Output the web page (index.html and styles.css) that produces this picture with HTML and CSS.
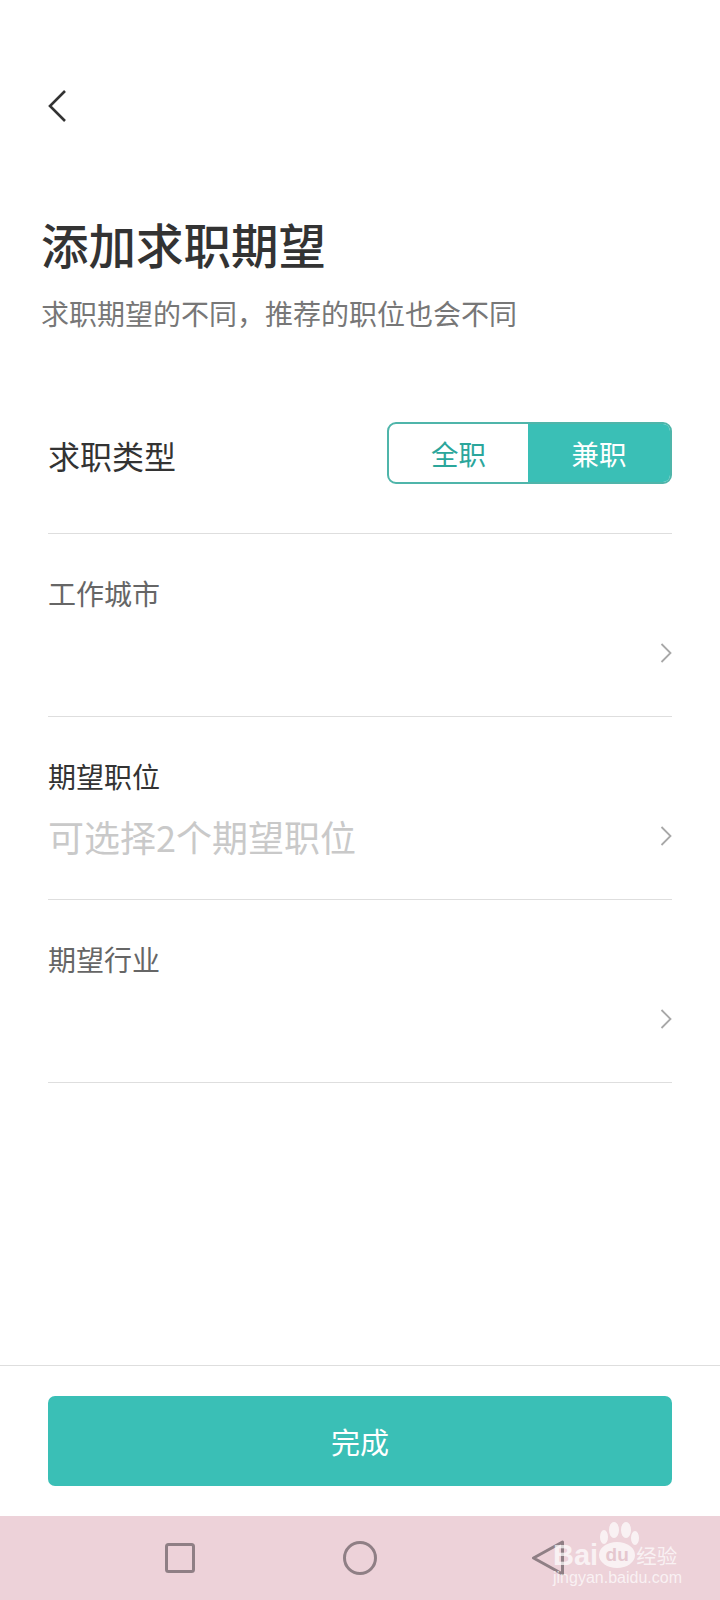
FILE: index.html
```html
<!DOCTYPE html>
<html lang="zh-CN">
<head>
    <meta charset="UTF-8">
    <meta name="viewport" content="width=device-width, initial-scale=1.0">
    <title>添加求职期望</title>
    <link rel="stylesheet" href="styles.css">
</head>
<body>
    <div class="page">
        <main class="content">
            <svg class="back" width="20" height="34" viewBox="0 0 20 34" fill="none">
                <path d="M18 2 L3 17 L18 32" stroke="#333" stroke-width="2.6"/>
            </svg>

            <h1 class="title">添加求职期望</h1>
            <p class="subtitle">求职期望的不同，推荐的职位也会不同</p>

            <div class="type-row">
                <span class="type-label">求职类型</span>
                <div class="toggle">
                    <span class="toggle-item">全职</span>
                    <span class="toggle-item active">兼职</span>
                </div>
            </div>

            <div class="row">
                <div class="row-label muted">工作城市</div>
                <div class="row-value">
                    <span class="placeholder"></span>
                    <svg class="arrow" width="12" height="22" viewBox="0 0 12 22" fill="none">
                        <path d="M1.5 2 L10.5 11 L1.5 20" stroke="#a8a8a8" stroke-width="1.8"/>
                    </svg>
                </div>
            </div>

            <div class="row">
                <div class="row-label">期望职位</div>
                <div class="row-value">
                    <span class="placeholder">可选择2个期望职位</span>
                    <svg class="arrow" width="12" height="22" viewBox="0 0 12 22" fill="none">
                        <path d="M1.5 2 L10.5 11 L1.5 20" stroke="#a8a8a8" stroke-width="1.8"/>
                    </svg>
                </div>
            </div>

            <div class="row">
                <div class="row-label muted">期望行业</div>
                <div class="row-value">
                    <span class="placeholder"></span>
                    <svg class="arrow" width="12" height="22" viewBox="0 0 12 22" fill="none">
                        <path d="M1.5 2 L10.5 11 L1.5 20" stroke="#a8a8a8" stroke-width="1.8"/>
                    </svg>
                </div>
            </div>
        </main>

        <div class="footer">
            <button class="done" type="button">完成</button>
        </div>

        <nav class="navbar">
            <svg width="30" height="30" viewBox="0 0 30 30" fill="none">
                <rect x="1.5" y="1.5" width="27" height="27" rx="2" stroke="#8f7f85" stroke-width="3"/>
            </svg>
            <svg width="34" height="34" viewBox="0 0 34 34" fill="none">
                <circle cx="17" cy="17" r="15.5" stroke="#8f7f85" stroke-width="3"/>
            </svg>
            <svg class="nav-back" width="34" height="36" viewBox="0 0 34 36" fill="none">
                <path d="M31.5 2 L2.5 18 L31.5 34 Z" stroke="#8f7f85" stroke-width="3" stroke-linejoin="round"/>
            </svg>
        </nav>

        <!-- 水印 -->
        <div class="watermark">
            <svg class="paw" width="46" height="24" viewBox="0 0 46 24" fill="#fff">
                <ellipse cx="6" cy="16" rx="4" ry="7"/>
                <ellipse cx="16" cy="9" rx="5" ry="8"/>
                <ellipse cx="28" cy="9" rx="5" ry="8"/>
                <ellipse cx="37" cy="17" rx="4" ry="7"/>
            </svg>
            <div class="wm-brand"><span>Bai</span><span class="wm-du">du</span><span class="wm-cn">经验</span></div>
            <div class="wm-url">jingyan.baidu.com</div>
        </div>
    </div>
</body>
</html>
```

FILE: styles.css
```css
* {
    box-sizing: border-box;
}

body {
    margin: 0;
    background-color: #fff;
    font-family: "Noto Sans CJK SC", "Noto Sans", sans-serif;
}

.page {
    position: relative;
    width: 720px;
    height: 1600px;
    display: flex;
    flex-direction: column;
    overflow: hidden;
}

.content {
    flex: 1;
    padding: 89px 48px 0;
}

.back {
    display: block;
    margin-left: -1px;
}

.title {
    margin: 89px 0 0 -7px;
    font-size: 47.5px;
    line-height: 64px;
    font-weight: 500;
    color: #333;
}

.subtitle {
    margin: 17px 0 0 -7px;
    font-size: 28px;
    line-height: 40px;
    color: #777;
}

.type-row {
    display: flex;
    justify-content: space-between;
    align-items: center;
    height: 131px;
    margin-top: 70px;
    padding-bottom: 31px;
    border-bottom: 1px solid #dedede;
}

.type-label {
    margin-top: 4px;
    font-size: 32px;
    color: #333;
}

.toggle {
    display: grid;
    grid-template-columns: 139px 1fr;
    width: 285px;
    height: 62px;
    border: 2px solid #4fb5aa;
    border-radius: 9px;
    overflow: hidden;
}

.toggle-item {
    display: flex;
    align-items: center;
    justify-content: center;
    font-size: 27.5px;
    color: #2ba69b;
}

.toggle-item.active {
    background-color: #3abfb6;
    color: #fff;
}

.row {
    height: 183px;
    padding-top: 41px;
    border-bottom: 1px solid #dedede;
}

.row-label {
    font-size: 28px;
    line-height: 36px;
    color: #333;
}

.row-label.muted {
    color: #666;
}

.row-value {
    display: flex;
    justify-content: space-between;
    align-items: center;
    height: 50px;
    margin-top: 17px;
}

.placeholder {
    font-size: 36px;
    color: #c9c9c9;
}

.arrow {
    flex-shrink: 0;
}

.footer {
    height: 151px;
    padding: 30px 48px;
    border-top: 1px solid #dedede;
}

.done {
    display: block;
    width: 100%;
    height: 90px;
    border: none;
    border-radius: 7px;
    background-color: #3abfb6;
    color: #fff;
    font-family: inherit;
    font-size: 29px;
}

.navbar {
    height: 84px;
    display: flex;
    align-items: center;
    gap: 148px;
    padding-left: 165px;
    background-color: #edd2d9;
}

.nav-back {
    margin-left: 6px;
}

.watermark {
    position: absolute;
    left: 553px;
    top: 1521px;
    width: 130px;
    color: #fff;
    opacity: 0.7;
}

.paw {
    position: absolute;
    left: 45px;
    top: 0;
}

.wm-brand {
    display: flex;
    align-items: center;
    margin-top: 18px;
    font-family: "Liberation Sans", sans-serif;
    font-size: 29px;
    font-weight: bold;
    line-height: 32px;
}

.wm-du {
    width: 36px;
    height: 26px;
    margin: 0 1px 0 1px;
    border-radius: 50%;
    background-color: #fff;
    color: #e3c3cb;
    font-size: 19px;
    line-height: 26px;
    text-align: center;
}

.wm-cn {
    font-family: "Noto Sans CJK SC", sans-serif;
    font-size: 20.5px;
    font-weight: normal;
}

.wm-url {
    margin-top: -3px;
    font-family: "Liberation Sans", sans-serif;
    font-size: 16px;
    line-height: 20px;
    white-space: nowrap;
}
```
